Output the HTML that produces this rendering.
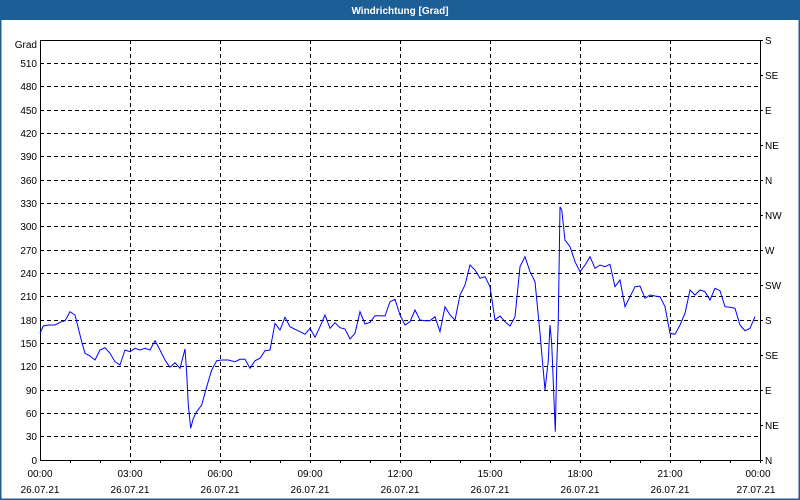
<!DOCTYPE html>
<html><head><style>
html,body{margin:0;padding:0;width:800px;height:500px;overflow:hidden;background:#fff}
svg{display:block}
text{font-family:"Liberation Sans",sans-serif;font-size:10px;fill:#000}
</style></head><body>
<svg width="800" height="500" viewBox="0 0 800 500">
<rect x="0" y="0" width="800" height="500" fill="#fff"/>
<rect x="0" y="0" width="800" height="20" fill="#1c5e96"/>
<rect x="0.5" y="0.5" width="799" height="499" fill="none" stroke="#1c5e96" stroke-width="2"/>
<text x="400" y="14" text-anchor="middle" style="fill:#fff;font-weight:bold;font-size:10px">Windrichtung [Grad]</text>
<g stroke="#000" stroke-dasharray="4,3" stroke-width="1">
<path d="M40 63.5H760M40 86.5H760M40 110.5H760M40 133.5H760M40 156.5H760M40 180.5H760M40 203.5H760M40 226.5H760M40 250.5H760M40 273.5H760M40 296.5H760M40 320.5H760M40 343.5H760M40 366.5H760M40 390.5H760M40 413.5H760M40 436.5H760"/>
<path d="M130.5 40V460M220.5 40V460M310.5 40V460M400.5 40V460M490.5 40V460M580.5 40V460M670.5 40V460"/>
</g>
<g stroke="#000" stroke-width="1" fill="none">
<path d="M40.5 40V460.5H760.5V40M40 40.5H763"/>
<path d="M70.5 460v3M100.5 460v3M130.5 460v3M160.5 460v3M190.5 460v3M220.5 460v3M250.5 460v3M280.5 460v3M310.5 460v3M340.5 460v3M370.5 460v3M400.5 460v3M430.5 460v3M460.5 460v3M490.5 460v3M520.5 460v3M550.5 460v3M580.5 460v3M610.5 460v3M640.5 460v3M670.5 460v3M700.5 460v3M730.5 460v3M760.5 460v3"/>
<path d="M760 75.5h3M760 110.5h3M760 145.5h3M760 180.5h3M760 215.5h3M760 250.5h3M760 285.5h3M760 320.5h3M760 355.5h3M760 390.5h3M760 425.5h3M760 460.5h3"/>
</g>
<g text-anchor="end">
<text x="37" y="48">Grad</text>
<text x="37" y="67">510</text><text x="37" y="90">480</text><text x="37" y="114">450</text><text x="37" y="137">420</text><text x="37" y="160">390</text><text x="37" y="184">360</text><text x="37" y="207">330</text><text x="37" y="230">300</text><text x="37" y="254">270</text><text x="37" y="277">240</text><text x="37" y="300">210</text><text x="37" y="324">180</text><text x="37" y="347">150</text><text x="37" y="370">120</text><text x="37" y="394">90</text><text x="37" y="417">60</text><text x="37" y="440">30</text><text x="37" y="464">0</text>
</g>
<g>
<text x="765" y="44">S</text><text x="765" y="79">SE</text><text x="765" y="114">E</text><text x="765" y="149">NE</text><text x="765" y="184">N</text><text x="765" y="219">NW</text><text x="765" y="254">W</text><text x="765" y="289">SW</text><text x="765" y="324">S</text><text x="765" y="359">SE</text><text x="765" y="394">E</text><text x="765" y="429">NE</text><text x="765" y="464">N</text>
</g>
<g text-anchor="middle">
<text x="40" y="477">00:00</text><text x="130" y="477">03:00</text><text x="220" y="477">06:00</text><text x="310" y="477">09:00</text><text x="400" y="477">12:00</text><text x="490" y="477">15:00</text><text x="580" y="477">18:00</text><text x="670" y="477">21:00</text><text x="758" y="477">00:00</text>
<text x="40" y="493">26.07.21</text><text x="130" y="493">26.07.21</text><text x="220" y="493">26.07.21</text><text x="310" y="493">26.07.21</text><text x="400" y="493">26.07.21</text><text x="490" y="493">26.07.21</text><text x="580" y="493">26.07.21</text><text x="670" y="493">26.07.21</text><text x="756" y="493">27.07.21</text>
</g>
<polyline fill="none" stroke="#0000ff" stroke-width="1" points="40,333.3 43.3,326 48.3,325 55,325 60,322.3 65,320.7 70,311.7 75,315 81.7,341.7 85,353.3 90,356 95,360 100,350 105,347.7 110,353.3 115,361.7 120,365 125,350 130,351.7 135,348.3 140,350 145,348.3 150,350 155,340.7 160,350 165,360 170,367.3 175,362.7 180,368.3 185,349 186.7,373.3 188.3,405 190.7,428.3 193.3,418.3 196.7,411.7 201.7,405 206.7,386.7 211.7,370 216.7,360.7 221.7,360 228.3,360 235,361.7 240,359.3 245,359.3 250,368.3 255,360.7 260,358.3 265,350.7 270,350 275,323.3 280,330 285,317.3 290,326.7 295,329.3 300,331.7 305,334.3 310,328.3 315,337.3 320,326.7 325,315 330,328.3 335,322.7 340,327.7 345,329 350,339 355,333.3 360,311.7 365,324 370,322.3 375,315.7 380,315.7 385,316 390,301.7 395,299.3 400,315 405,325 410,321.7 415,310 420,320 425,320.7 430,320.7 435,316.7 440,331.7 445,306.7 450,315 455,320 460,295 465,285 470,265 475,270 480,278.3 485,276.7 490,286.7 495,320 500,316 505,321.7 510,326 515,316.7 520,266.7 525,256.7 530,271.7 535,281.7 540,333.3 545,390 548.3,360 550,325 551.7,343.3 554,400 555.3,431.7 556.7,366.7 558.3,320 559,273.3 560,206.7 561.7,210 565,240 570,246.7 575,261.7 580,271.7 585,265 590,256.7 595,268.3 600,265 605,266.7 610,264.3 615,286.7 620,280 625,306.7 630,296.7 635,286.7 640,286 645,298.3 650,295 655,296 660,296.7 665,306.7 670,333.3 675,334.3 680,325 685,313.3 690,290 695,295 700,290 705,291.7 710,300 715,288.3 720,290.7 725,306.7 730,307.3 735,308.3 740,325 745,330.7 750,328.3 755,316.7"/>
</svg>
</body></html>
